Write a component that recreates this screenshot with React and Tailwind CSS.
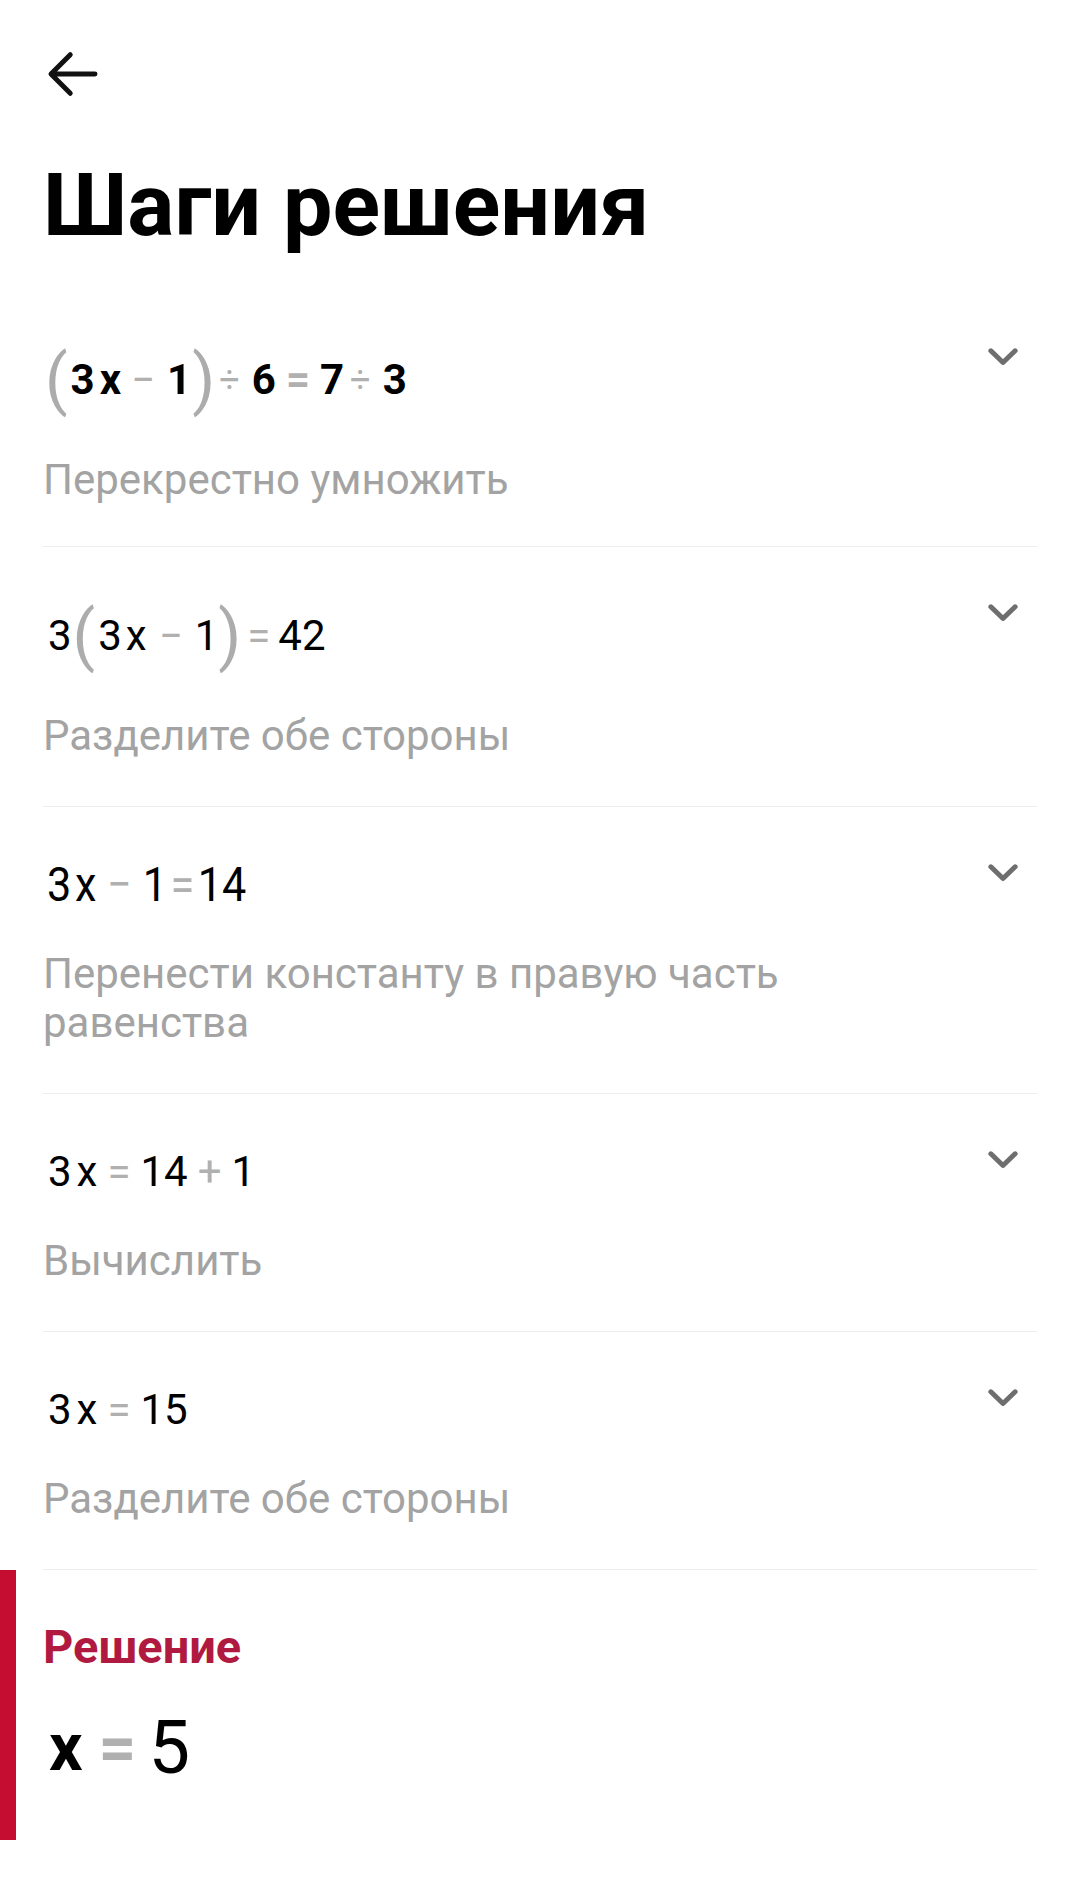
import React from 'react';

const Op = ({ children, className = '' }) => (
    <span className={`text-[#b0b0b0] ${className}`}>{children}</span>
);

const Paren = ({ children, className = '' }) => (
    <span className={`text-[66px] leading-none font-normal text-[#acacac] ${className}`}>{children}</span>
);

const Chevron = () => (
    <svg viewBox="0 0 24 24" className="w-[52px] h-[52px] -mt-[9px] mr-[8px] shrink-0" fill="none">
        <polyline points="6.4 9.6 12 15 17.6 9.6" stroke="#6e6e6e" strokeWidth="2.3" strokeLinecap="round" strokeLinejoin="round" />
    </svg>
);

const StepRow = ({ tall, equation, children, pb = 'pb-[46px]' }) => (
    <div className={`flex items-start justify-between pt-[48px] ${pb} border-b border-[#ededed]`}>
        <div className="w-[780px]">
            <div className={`${tall ? 'h-[82px]' : 'h-[60px]'} flex items-center text-[42px] leading-none text-black`}>
                {equation}
            </div>
            <p className="mt-[34px] text-[42px] leading-[49px] text-[#a3a3a3]">{children}</p>
        </div>
        <Chevron />
    </div>
);

export default function App() {
    return (
        <div className="w-[1080px] min-h-[1883px] bg-white font-[Roboto,'Noto_Sans',sans-serif]">
            <div className="px-[43px]">
                <svg viewBox="0 0 24 24" className="w-[66px] h-[66px] -ml-[3px] mt-[41px]" fill="none">
                    <path d="M20 12H4.3M11 5l-7 7 7 7" stroke="#111" strokeWidth="1.8" strokeLinecap="round" strokeLinejoin="round" />
                </svg>
                <h1 className="mt-[54px] text-[88px] leading-none font-bold text-black">Шаги решения</h1>

                <div className="mt-[42px]">
                    <StepRow
                        tall
                        pb="pb-[42px]"
                        equation={
                            <div className="flex items-center font-bold">
                                <Paren className="ml-[2px]">(</Paren>
                                <span className="ml-[3px]">3</span>
                                <span className="ml-[5px]">x</span>
                                <Op className="font-normal ml-[10px]">−</Op>
                                <span className="ml-[12px]">1</span>
                                <Paren className="ml-[1px]">)</Paren>
                                <Op className="font-normal text-[36px] ml-[4px]">÷</Op>
                                <span className="ml-[12px]">6</span>
                                <Op className="ml-[10px]">=</Op>
                                <span className="ml-[10px]">7</span>
                                <Op className="font-normal text-[36px] ml-[6px]">÷</Op>
                                <span className="ml-[12px]">3</span>
                            </div>
                        }
                    >
                        Перекрестно умножить
                    </StepRow>

                    <StepRow
                        tall
                        equation={
                            <div className="flex items-center ml-[5px]">
                                <span>3</span>
                                <Paren className="ml-[1px]">(</Paren>
                                <span className="ml-[3px]">3</span>
                                <span className="ml-[4px]">x</span>
                                <Op className="ml-[12px]">−</Op>
                                <span className="ml-[12px]">1</span>
                                <Paren>)</Paren>
                                <Op className="ml-[6px]">=</Op>
                                <span className="ml-[8px]">42</span>
                            </div>
                        }
                    >
                        Разделите обе стороны
                    </StepRow>

                    <StepRow
                        equation={
                            <div className="flex items-center gap-[4px] ml-[4px] scale-x-[0.9] origin-left text-[48px]">
                                <span>3</span>
                                <span>x</span>
                                <Op className="mx-[8px]">−</Op>
                                <span>1</span>
                                <Op>=</Op>
                                <span>14</span>
                            </div>
                        }
                    >
                        Перенести константу в правую часть равенства
                    </StepRow>

                    <StepRow
                        equation={
                            <div className="flex items-center gap-[6px] ml-[5px]">
                                <span>3</span>
                                <span className="-ml-[1px]">x</span>
                                <Op className="ml-[4px]">=</Op>
                                <span className="ml-[4px]">14</span>
                                <Op className="ml-[4px]">+</Op>
                                <span className="ml-[4px]">1</span>
                            </div>
                        }
                    >
                        Вычислить
                    </StepRow>

                    <StepRow
                        equation={
                            <div className="flex items-center gap-[6px] ml-[5px]">
                                <span>3</span>
                                <span className="-ml-[1px]">x</span>
                                <Op className="ml-[4px]">=</Op>
                                <span className="ml-[4px]">15</span>
                            </div>
                        }
                    >
                        Разделите обе стороны
                    </StepRow>
                </div>
            </div>

            <div className="flex">
                <div className="w-[16px] bg-[#c40d30]" />
                <div className="pl-[27px] pt-[52px] pb-[60px]">
                    <h2 className="text-[47px] leading-[49px] font-bold text-[#b01a40]">Решение</h2>
                    <div className="mt-[45px] h-[64px] flex items-center ml-[6px] leading-none text-black">
                        <span className="font-bold text-[66px]">x</span>
                        <Op className="font-bold text-[66px] ml-[16px]">=</Op>
                        <span className="text-[74px] ml-[12px]">5</span>
                    </div>
                </div>
            </div>
        </div>
    );
}
